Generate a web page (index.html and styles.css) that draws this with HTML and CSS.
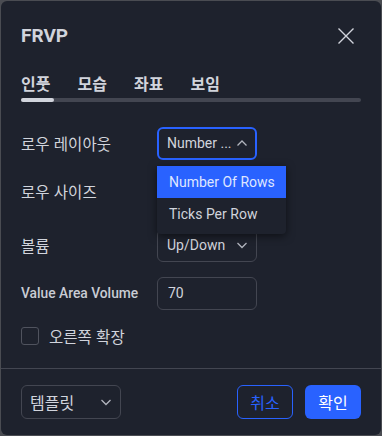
FILE: index.html
```html
<!DOCTYPE html>
<html lang="ko">
<head>
<meta charset="utf-8">
<title>FRVP</title>
<link rel="stylesheet" href="styles.css">
</head>
<body>
<div class="dialog">
  <div class="header">
    <div class="title">FRVP</div>
    <svg class="close" width="18" height="18" viewBox="0 0 18 18"><path d="M1.5 1.5 L16.5 16.5 M16.5 1.5 L1.5 16.5" stroke="#d1d4dc" stroke-width="1.4" fill="none"/></svg>
  </div>
  <div class="tabs">
    <div class="tab active">인풋</div>
    <div class="tab">모습</div>
    <div class="tab">좌표</div>
    <div class="tab">보임</div>
  </div>
  <div class="track"><div class="indicator"></div></div>
  <div class="body">
    <div class="row r1">
      <div class="label ko">로우 레이아웃</div>
      <div class="field select focused">
        <span class="val">Number ...</span>
        <svg class="chev" width="12" height="8" viewBox="0 0 12 8"><path d="M1.5 6.5 L6 2 L10.5 6.5" stroke="#b2b5be" stroke-width="1.3" fill="none"/></svg>
      </div>
      <div class="menu">
        <div class="item selected">Number Of Rows</div>
        <div class="item">Ticks Per Row</div>
      </div>
    </div>
    <div class="row r2">
      <div class="label ko">로우 사이즈</div>
    </div>
    <div class="row">
      <div class="label ko">볼륨</div>
      <div class="field select">
        <span class="val">Up/Down</span>
        <svg class="chev" width="12" height="8" viewBox="0 0 12 8"><path d="M1.5 2 L6 6.5 L10.5 2" stroke="#b2b5be" stroke-width="1.3" fill="none"/></svg>
      </div>
    </div>
    <div class="row">
      <div class="label strong">Value Area Volume</div>
      <div class="field input"><span class="val">70</span></div>
    </div>
    <div class="check-row">
      <div class="checkbox"></div>
      <div class="label ko">오른쪽 확장</div>
    </div>
  </div>
  <div class="footer">
    <div class="field select template">
      <span class="val ko">템플릿</span>
      <svg class="chev" width="12" height="8" viewBox="0 0 12 8"><path d="M1.5 2 L6 6.5 L10.5 2" stroke="#b2b5be" stroke-width="1.3" fill="none"/></svg>
    </div>
    <div class="actions">
      <div class="btn ghost">취소</div>
      <div class="btn primary">확인</div>
    </div>
  </div>
</div>
</body>
</html>
```
FILE: styles.css
```css
* { box-sizing: border-box; }
html, body { margin: 0; padding: 0; }
body {
  width: 382px;
  height: 436px;
  background: #4a4c52;
  font-family: Roboto, "Noto Sans CJK KR", sans-serif;
  color: #d1d4dc;
  padding: 1px;
  overflow: hidden;
}
.dialog {
  width: 380px;
  height: 434px;
  background: #1e222d;
  border-radius: 6px;
  display: flex;
  flex-direction: column;
}
.header {
  display: flex;
  justify-content: space-between;
  align-items: center;
  padding: 0 26px 0 20px;
  height: 70px;
}
.title {
  font-size: 19px;
  font-weight: 700;
  line-height: 24px;
  margin-top: -1px;
}
.close { display: block; margin-top: -1px; }
.tabs {
  display: flex;
  gap: 24.5px;
  padding: 0 20px;
  height: 24px;
  align-items: center;
}
.tab {
  font-size: 16px;
  font-weight: 700;
  line-height: 20px;
  width: 32px;
  font-family: "Noto Sans CJK KR", sans-serif;
  color: #d1d4dc;
}
.track {
  margin: 3px 20px 0;
  height: 4px;
  background: #434651;
  border-radius: 2px;
}
.indicator {
  width: 33px;
  height: 4px;
  background: #d1d4dc;
  border-radius: 2px;
}
.body {
  flex: 1;
  padding: 25px 20px 0;
  display: flex;
  flex-direction: column;
  gap: 16px;
}
.row {
  position: relative;
  display: flex;
  align-items: center;
  height: 32px;
}
.row.r2 { height: 38px; align-items: flex-start; padding-top: 6px; }
.label {
  width: 136px;
  font-size: 14px;
  line-height: 20px;
  color: #d1d4dc;
}
.ko {
  font-family: "Noto Sans CJK KR", sans-serif;
  font-size: 15.5px;
}
.label.strong { font-weight: 500; font-size: 13.8px; color: #c9ccd4; }
.field {
  width: 100px;
  height: 32px;
  border: 1px solid #434651;
  border-radius: 6px;
  display: flex;
  align-items: center;
  justify-content: space-between;
  padding: 0 8px 0 9px;
  font-size: 14px;
}
.row .field { height: 33px; }
.field.focused { border: 2px solid #2962ff; padding: 0 7px 0 8px; }
.field.input { justify-content: flex-start; padding-left: 10px; }
.val { line-height: 20px; white-space: nowrap; }
.chev { display: block; }
.menu {
  position: absolute;
  left: 136px;
  top: 39px;
  width: 129px;
  background: #1e222d;
  border-radius: 0 0 4px 4px;
  box-shadow: 0 2px 8px rgba(0,0,0,0.55);
  padding-bottom: 4px;
  z-index: 5;
}
.item {
  height: 32px;
  display: flex;
  align-items: center;
  padding-left: 12px;
  font-size: 14px;
  color: #d1d4dc;
}
.item.selected { background: #2962ff; color: #dfe6ff; }
.check-row {
  display: flex;
  align-items: center;
  gap: 10px;
  height: 20px;
  margin-top: 1px;
}
.checkbox {
  width: 18px;
  height: 18px;
  border: 1px solid #50535e;
  border-radius: 3px;
}
.footer {
  border-top: 1px solid #434651;
  height: 67px;
  display: flex;
  justify-content: space-between;
  align-items: center;
  padding: 0 20px;
}
.template { height: 34px; padding-left: 8px; }
.template .val { font-size: 16px; }
.actions { display: flex; gap: 12px; }
.btn {
  width: 56px;
  height: 34px;
  border-radius: 6px;
  display: flex;
  align-items: center;
  justify-content: center;
  font-size: 16px;
  line-height: 20px;
  font-family: "Noto Sans CJK KR", sans-serif;
}
.btn.ghost { border: 1px solid #2962ff; color: #2962ff; }
.btn.primary { background: #2962ff; color: #ffffff; }
```
